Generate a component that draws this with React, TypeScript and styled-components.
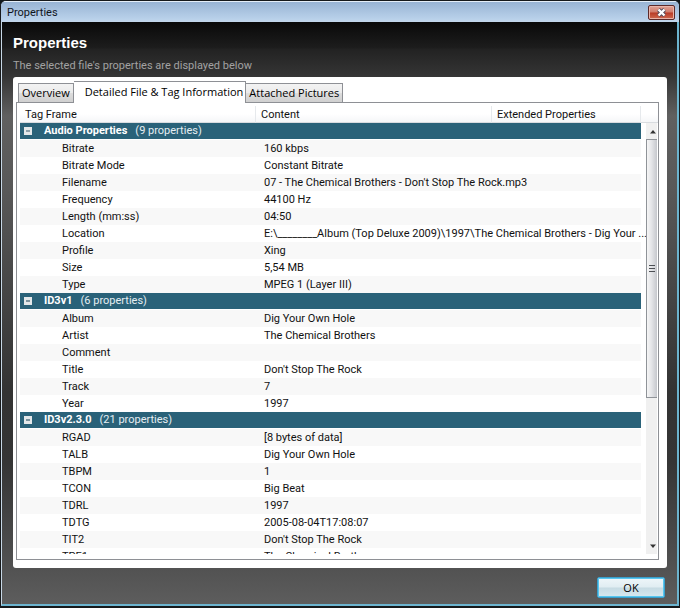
import React, { useState } from "react";
import styled, { createGlobalStyle, css } from "styled-components";

const GlobalStyle = createGlobalStyle`
  *, *::before, *::after { box-sizing: border-box; }
  html, body { margin: 0; height: 100%; background: #10181c; }
  #root { height: 100%; }
  body, button { font-family: "Open Sans", "Noto Sans", sans-serif; font-size: 11px; }
`;

const Window = styled.main`
  height: 100vh;
  display: flex;
  flex-direction: column;
  border: 1px solid #16191b;
  border-bottom-width: 2px;
  border-radius: 6px 6px 0 0;
  background: #b4cce6;
  overflow: hidden;
`;

const TitleBar = styled.header`
  flex: none;
  height: 21px;
  display: flex;
  align-items: center;
  justify-content: space-between;
  padding: 0 4px 0 6px;
  border-top: 1px solid #e4eef8;
  background: linear-gradient(#98b4d4, #b9d1ea 85%, #c3d6ea);
  color: #10151c;
  font-family: Roboto, sans-serif;
`;

const CloseButton = styled.button`
  width: 27px;
  height: 15px;
  display: flex;
  align-items: center;
  justify-content: center;
  padding: 0;
  border: 1px solid #5c2a2a;
  border-radius: 2px;
  background: linear-gradient(#e0a396, #d07a6a 48%, #b83a26 52%, #cf6a50);
  box-shadow: inset 0 0 0 1px #e9b5aa;
`;

const Client = styled.div`
  flex: 1;
  min-height: 0;
  display: flex;
  flex-direction: column;
  border: solid #6cb4cf;
  border-width: 0 2px 2px 1px;
  border-left-color: #c8d8e6;
  padding: 0 10px 6px 11px;
  background: linear-gradient(
    #090909 0,
    #1d1d1d 26px,
    #222222 27px,
    #353535 54px,
    #606060 94px,
    #585858 170px,
    #333333 370px,
    #353535 440px,
    #505050 540px,
    #5d5d5d 100%
  );
`;

const Heading = styled.h1`
  margin: 12px 0 0;
  font: bold 15px/18px "Liberation Sans", Arial, sans-serif;
  color: #ffffff;
`;

const Subtitle = styled.p`
  margin: 5px 0 2px;
  font-family: Roboto, sans-serif;
  font-size: 11px;
  line-height: 18px;
  color: #a2a2a2;
`;

const Panel = styled.section`
  flex: 1;
  min-height: 0;
  display: flex;
  flex-direction: column;
  padding: 4px 8px 8px 3px;
  border-radius: 3px;
  background: #ffffff;
`;

const TabList = styled.div`
  flex: none;
  height: 21px;
  display: flex;
  align-items: flex-end;
  padding-left: 2px;
`;

const Tab = styled.button<{ $active?: boolean }>`
  height: 19px;
  padding: 0 3px;
  border: 1px solid #8e9095;
  border-bottom: 0;
  background: linear-gradient(#f3f3f3, #ebebeb 50%, #dddddd 51%, #d0d0d0);
  line-height: 18px;
  color: #000000;
  white-space: nowrap;
  & + & { border-left: 0; }
  ${(p) =>
    p.$active &&
    css`
      height: 22px;
      margin-bottom: -1px;
      padding: 0 2px 2px 11px;
      background: #ffffff;
      z-index: 1;
    `}
`;

const ListFrame = styled.div`
  flex: 1;
  min-height: 0;
  display: flex;
  flex-direction: column;
  padding: 3px 0 5px 3px;
  border: 1px solid #8e9095;
`;

const ListBody = styled.div`
  flex: 1;
  min-height: 0;
  display: flex;
  overflow: hidden;
`;

const TableArea = styled.div`
  flex: 1;
  min-width: 0;
`;

const Table = styled.table`
  width: 100%;
  table-layout: fixed;
  border-collapse: separate;
  border-spacing: 0;
  font-family: Roboto, sans-serif;
  font-size: 11px;
  color: #111111;
`;

const Col = styled.col<{ $width?: string }>`
  width: ${(p) => p.$width ?? "auto"};
`;

const HeadCell = styled.th`
  height: 17px;
  padding: 1px 5px 0;
  border-right: 1px solid #e6e9ec;
  border-bottom: 1px solid #d9dce0;
  background: linear-gradient(#ffffff 50%, #f5f6f8);
  font-weight: 400;
  line-height: 15px;
  text-align: left;
`;

const GroupCell = styled.th`
  height: 17px;
  padding: 0;
  border-bottom: 1px solid #ffffff;
  background: #2a6279;
  color: #ffffff;
  line-height: 16px;
  text-align: left;
`;

const GroupLabel = styled.div`
  display: flex;
  align-items: center;
  height: 16px;
  padding-left: 4px;
`;

const ExpandButton = styled.button`
  width: 8px;
  height: 8px;
  display: flex;
  margin-right: 12px;
  padding: 0;
  border: 0;
  background: none;
`;

const GroupCount = styled.span`
  margin-left: 8px;
  font-weight: 400;
  color: #e6eef2;
`;

const Row = styled.tr<{ $shaded: boolean }>`
  background: ${(p) => (p.$shaded ? "#f8f8f8" : "#ffffff")};
`;

const Cell = styled.td<{ $indent?: boolean }>`
  height: 17px;
  padding: 0 0 0 ${(p) => (p.$indent ? "42px" : "8px")};
  line-height: 17px;
  white-space: nowrap;
`;

const ScrollColumn = styled.div`
  flex: none;
  width: 17px;
  display: flex;
  flex-direction: column;
  padding: 0 1px 0 5px;
`;

const HeaderFill = styled.div`
  flex: none;
  height: 17px;
  margin: 0 -1px 0 -5px;
  border-bottom: 1px solid #d9dce0;
  background: linear-gradient(#ffffff 50%, #f5f6f8);
`;

const ScrollTrack = styled.div`
  flex: 1;
  display: flex;
  flex-direction: column;
  background: #f0f0f0;
`;

const ScrollArrow = styled.button`
  flex: none;
  height: 16px;
  display: flex;
  align-items: center;
  justify-content: flex-end;
  padding: 0;
  border: 0;
  background: none;
`;

const ThumbRun = styled.div`
  flex: 1;
  min-height: 0;
`;

const Thumb = styled.div`
  height: 65%;
  display: flex;
  align-items: center;
  justify-content: center;
  border: 1px solid #8f9398;
  border-right: 0;
  background: linear-gradient(90deg, #f6f6f6, #e4e5e8 45%, #c6c8cd);
`;

const Footer = styled.footer`
  flex: none;
  display: flex;
  justify-content: flex-end;
  padding: 9px 2px 0;
`;

const OkButton = styled.button`
  width: 68px;
  height: 21px;
  padding: 0;
  border: 1px solid #3a9fcb;
  border-radius: 2px;
  box-shadow: inset 0 0 0 1px #58c6ee;
  background: linear-gradient(#eef6f9, #e0edf2 48%, #c6dbe3 52%, #d8e8ee);
  font-size: 11px;
  line-height: 18px;
  color: #000000;
`;

type Group = { name: string; count: number; rows: [string, string][] };

const groups: Group[] = [
  {
    name: "Audio Properties",
    count: 9,
    rows: [
      ["Bitrate", "160 kbps"],
      ["Bitrate Mode", "Constant Bitrate"],
      ["Filename", "07 - The Chemical Brothers - Don't Stop The Rock.mp3"],
      ["Frequency", "44100 Hz"],
      ["Length (mm:ss)", "04:50"],
      ["Location", "E:\\________Album (Top Deluxe 2009)\\1997\\The Chemical Brothers - Dig Your ..."],
      ["Profile", "Xing"],
      ["Size", "5,54 MB"],
      ["Type", "MPEG 1 (Layer III)"],
    ],
  },
  {
    name: "ID3v1",
    count: 6,
    rows: [
      ["Album", "Dig Your Own Hole"],
      ["Artist", "The Chemical Brothers"],
      ["Comment", ""],
      ["Title", "Don't Stop The Rock"],
      ["Track", "7"],
      ["Year", "1997"],
    ],
  },
  {
    name: "ID3v2.3.0",
    count: 21,
    rows: [
      ["RGAD", "[8 bytes of data]"],
      ["TALB", "Dig Your Own Hole"],
      ["TBPM", "1"],
      ["TCON", "Big Beat"],
      ["TDRL", "1997"],
      ["TDTG", "2005-08-04T17:08:07"],
      ["TIT2", "Don't Stop The Rock"],
      ["TPE1", "The Chemical Brothers"],
    ],
  },
];

function PropertyGroup({ group }: { group: Group }) {
  const [open, setOpen] = useState(true);
  return (
    <tbody>
      <tr>
        <GroupCell colSpan={3} scope="rowgroup">
          <GroupLabel>
            <ExpandButton
              type="button"
              aria-expanded={open}
              aria-label={`Toggle ${group.name}`}
              onClick={() => setOpen(!open)}
            >
              <svg width="8" height="8" viewBox="0 0 8 8">
                <rect width="8" height="8" fill="#e4e8ea" />
                <path d={open ? "M2 4h4" : "M2 4h4M4 2v4"} stroke="#35596a" strokeWidth="1.2" />
              </svg>
            </ExpandButton>
            {group.name}
            <GroupCount>({group.count} properties)</GroupCount>
          </GroupLabel>
        </GroupCell>
      </tr>
      {open &&
        group.rows.map(([frame, content], i) => (
          <Row key={frame} $shaded={i % 2 === 0}>
            <Cell $indent>{frame}</Cell>
            <Cell colSpan={2}>{content}</Cell>
          </Row>
        ))}
    </tbody>
  );
}

export default function App() {
  return (
    <>
      <GlobalStyle />
      <Window>
        <TitleBar>
          <span>Properties</span>
          <CloseButton type="button" aria-label="Close">
            <svg width="11" height="9" viewBox="0 0 11 9">
              <path d="M2.5 1.5l6 6M8.5 1.5l-6 6" stroke="#4e4a5c" strokeWidth="4" />
              <path d="M2.5 1.5l6 6M8.5 1.5l-6 6" stroke="#ffffff" strokeWidth="2.4" />
            </svg>
          </CloseButton>
        </TitleBar>
        <Client>
          <Heading>Properties</Heading>
          <Subtitle>The selected file's properties are displayed below</Subtitle>
          <Panel>
            <TabList role="tablist">
              <Tab type="button" role="tab" aria-selected={false}>Overview</Tab>
              <Tab type="button" role="tab" aria-selected $active>Detailed File &amp; Tag Information</Tab>
              <Tab type="button" role="tab" aria-selected={false}>Attached Pictures</Tab>
            </TabList>
            <ListFrame role="tabpanel">
              <ListBody>
                <TableArea>
                  <Table>
                    <colgroup>
                      <Col $width="38%" />
                      <Col $width="38%" />
                      <Col />
                    </colgroup>
                    <thead>
                      <tr>
                        <HeadCell scope="col">Tag Frame</HeadCell>
                        <HeadCell scope="col">Content</HeadCell>
                        <HeadCell scope="col">Extended Properties</HeadCell>
                      </tr>
                    </thead>
                    {groups.map((group) => (
                      <PropertyGroup key={group.name} group={group} />
                    ))}
                  </Table>
                </TableArea>
                <ScrollColumn>
                  <HeaderFill />
                  <ScrollTrack>
                    <ScrollArrow type="button" aria-label="Scroll up">
                      <svg width="8" height="5" viewBox="0 0 8 5"><path d="M1 4.5L4 1l3 3.5z" fill="#333333" /></svg>
                    </ScrollArrow>
                    <ThumbRun>
                      <Thumb>
                        <svg width="6" height="9" viewBox="0 0 6 9">
                          <path d="M0 1.5h6M0 4.5h6M0 7.5h6" stroke="#4c4f54" />
                        </svg>
                      </Thumb>
                    </ThumbRun>
                    <ScrollArrow type="button" aria-label="Scroll down">
                      <svg width="8" height="5" viewBox="0 0 8 5"><path d="M1 .5L4 4l3-3.5z" fill="#333333" /></svg>
                    </ScrollArrow>
                  </ScrollTrack>
                </ScrollColumn>
              </ListBody>
            </ListFrame>
          </Panel>
          <Footer>
            <OkButton type="button">OK</OkButton>
          </Footer>
        </Client>
      </Window>
    </>
  );
}
